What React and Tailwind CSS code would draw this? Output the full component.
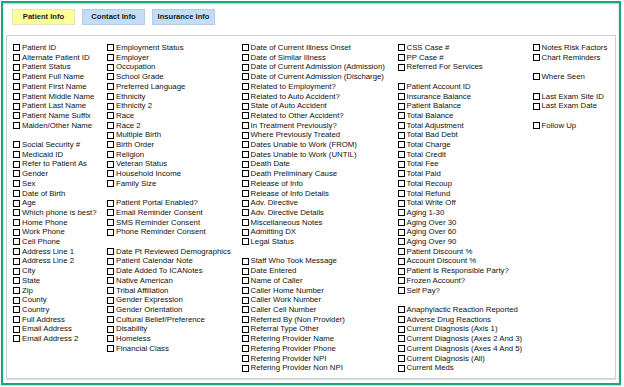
import React from "react";

const cols = [
  {
    w: "w-[94px]",
    items: [
      "Patient ID", "Alternate Patient ID", "Patient Status", "Patient Full Name", "Patient First Name",
      "Patient Middle Name", "Patient Last Name", "Patient Name Suffix", "Maiden/Other Name", null,
      "Social Security #", "Medicaid ID", "Refer to Patient As", "Gender", "Sex", "Date of Birth", "Age",
      "Which phone is best?", "Home Phone", "Work Phone", "Cell Phone", "Address Line 1", "Address Line 2",
      "City", "State", "Zip", "County", "Country", "Full Address", "Email Address", "Email Address 2",
    ],
  },
  {
    w: "w-[134.5px]",
    items: [
      "Employment Status", "Employer", "Occupation", "School Grade", "Preferred Language", "Ethnicity",
      "Ethnicity 2", "Race", "Race 2", "Multiple Birth", "Birth Order", "Religion", "Veteran Status",
      "Household Income", "Family Size", null, "Patient Portal Enabled?", "Email Reminder Consent",
      "SMS Reminder Consent", "Phone Reminder Consent", null, "Date Pt Reviewed Demographics",
      "Patient Calendar Note", "Date Added To ICANotes", "Native American", "Tribal Affiliation",
      "Gender Expression", "Gender Orientation", "Cultural Belief/Preference", "Disability", "Homeless",
      "Financial Class",
    ],
  },
  {
    w: "w-[156px]",
    items: [
      "Date of Current Illness Onset", "Date of Similar Illness", "Date of Current Admission (Admission)",
      "Date of Current Admission (Discharge)", "Related to Employment?", "Related to Auto Accident?",
      "State of Auto Accident", "Related to Other Accident?", "In Treatment Previously?",
      "Where Previously Treated", "Dates Unable to Work (FROM)", "Dates Unable to Work (UNTIL)",
      "Death Date", "Death Preliminary Cause", "Release of Info", "Release of Info Details",
      "Adv. Directive", "Adv. Directive Details", "Miscellaneous Notes", "Admitting DX", "Legal Status",
      null, "Staff Who Took Message", "Date Entered", "Name of Caller", "Caller Home Number",
      "Caller Work Number", "Caller Cell Number", "Referred By (Non Provider)", "Referral Type Other",
      "Refering Provider Name", "Refering Provider Phone", "Refering Provider NPI",
      "Refering Provider Non NPI",
    ],
  },
  {
    w: "w-[135px]",
    items: [
      "CSS Case #", "PP Case #", "Referred For Services", null, "Patient Account ID", "Insurance Balance",
      "Patient Balance", "Total Balance", "Total Adjustment", "Total Bad Debt", "Total Charge",
      "Total Credit", "Total Fee", "Total Paid", "Total Recoup", "Total Refund", "Total Write Off",
      "Aging 1-30", "Aging Over 30", "Aging Over 60", "Aging Over 90", "Patient Discount %",
      "Account Discount %", "Patient Is Responsible Party?", "Frozen Account?", "Self Pay?", null,
      "Anaphylactic Reaction Reported", "Adverse Drug Reactions", "Current Diagnosis (Axis 1)",
      "Current Diagnosis (Axes 2 And 3)", "Current Diagnosis (Axes 4 And 5)", "Current Diagnosis (All)",
      "Current Meds",
    ],
  },
  {
    w: "flex-1",
    items: [
      "Notes Risk Factors", "Chart Reminders", null, "Where Seen", null, "Last Exam Site ID",
      "Last Exam Date", null, "Follow Up",
    ],
  },
];

function Row({ label }) {
  if (!label) return <div className="h-[9.71px]" />;
  return (
    <div className="h-[9.71px] flex items-center whitespace-nowrap">
      <span className="w-[7px] h-[7px] border-[1.5px] border-black bg-white shrink-0" />
      <span className="ml-[2px] text-[7.8px] leading-[9.71px] text-[#111111]">{label}</span>
    </div>
  );
}

export default function App() {
  return (
    <div
      className="w-[624px] h-[387px] bg-white overflow-hidden pt-[1px] pl-[1px]"
      style={{ fontFamily: '"Liberation Sans", Arial, sans-serif' }}
    >
      <div className="w-[620px] h-[384px] border-2 border-[#1fa37e] bg-white flex flex-col shadow-[inset_0_1px_2px_rgba(0,0,0,0.25),0_1px_1px_rgba(0,0,0,0.15)]">
        <div className="flex gap-[7px] pl-[9px] pt-[6px]">
          <div className="w-[63px] h-[16px] bg-[#ffff99] border border-[#e4e4b8] flex items-center justify-center text-[7.6px] font-bold text-[#1a1a1a]">
            Patient Info
          </div>
          <div className="w-[63px] h-[16px] bg-[#c3ddf7] border border-[#b4cbe0] flex items-center justify-center text-[7.6px] font-bold text-[#1a1a1a]">
            Contact Info
          </div>
          <div className="w-[63px] h-[16px] bg-[#c3ddf7] border border-[#b4cbe0] flex items-center justify-center text-[7.6px] font-bold text-[#1a1a1a]">
            Insurance Info
          </div>
        </div>
        <div className="mt-[10px] ml-[3px] mr-[3px] mb-[4px] flex-1 border border-[#cfcfcf] shadow-[0_1px_1px_rgba(0,0,0,0.12)] flex pt-[7px] pl-[6px]">
          {cols.map((c, i) => (
            <div key={i} className={`${c.w} flex flex-col`}>
              {c.items.map((it, j) => (
                <Row key={j} label={it} />
              ))}
            </div>
          ))}
        </div>
      </div>
    </div>
  );
}
